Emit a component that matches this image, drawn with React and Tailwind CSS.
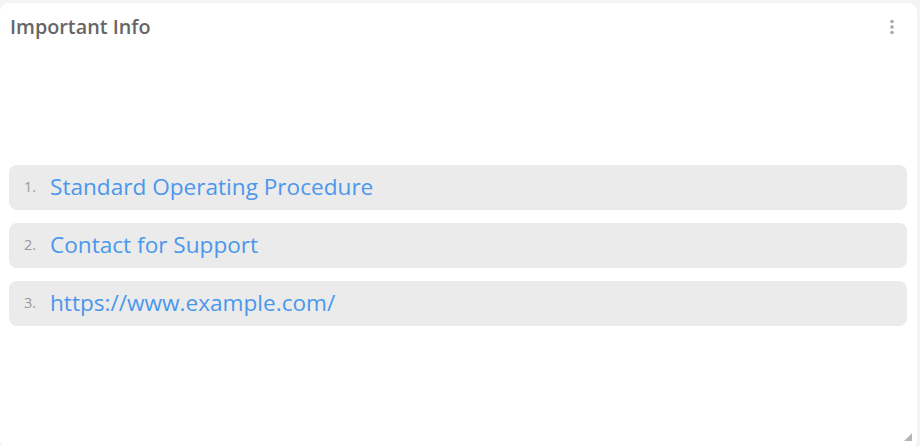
import React from "react";

const links = [
  { label: "Standard Operating Procedure", href: "#" },
  { label: "Contact for Support", href: "#" },
  { label: "https://www.example.com/", href: "#" },
];

const App = () => {
  return (
    <div className="w-[920px] h-[446px] bg-[#f4f4f4] pt-[3px] pr-[3px] overflow-hidden font-['Open_Sans','Liberation_Sans',sans-serif]">
      <div className="relative h-[446px] bg-white rounded-[9px] flex flex-col">
        {/* Header */}
        <div className="flex justify-between items-start pl-[10px] pr-[22px] pt-[11px] h-[46px]">
          <h2 className="text-[19.8px] font-semibold text-[#666] leading-[26px]">Important Info</h2>
          <svg width="6" height="16" viewBox="0 0 6 16" className="mt-[5px]">
            <circle cx="3" cy="2.5" r="1.8" fill="#a8a8a8" />
            <circle cx="3" cy="8" r="1.8" fill="#a8a8a8" />
            <circle cx="3" cy="13.5" r="1.8" fill="#a8a8a8" />
          </svg>
        </div>

        {/* Link list */}
        <div className="flex-1 flex items-center pb-[8px]">
          <ol className="w-full flex flex-col gap-[13px] pl-[9px] pr-[10px]">
            {links.map((link, i) => (
              <li
                key={link.label}
                className="h-[45px] bg-[#ebebeb] rounded-[8px] flex items-center pl-[15px]"
              >
                <span className="w-[26px] text-[14.5px] text-[#999]">{i + 1}.</span>
                <a href={link.href} className="text-[22.6px] text-[#4a97ec] leading-none">
                  {link.label}
                </a>
              </li>
            ))}
          </ol>
        </div>

        {/* resize handle */}
        <svg width="8" height="8" viewBox="0 0 8 8" className="absolute right-[5px] bottom-[8px]">
          <path d="M8 0 L8 8 L0 8 Z" fill="#b5b5b5" />
        </svg>
      </div>
    </div>
  );
};

export default App;
